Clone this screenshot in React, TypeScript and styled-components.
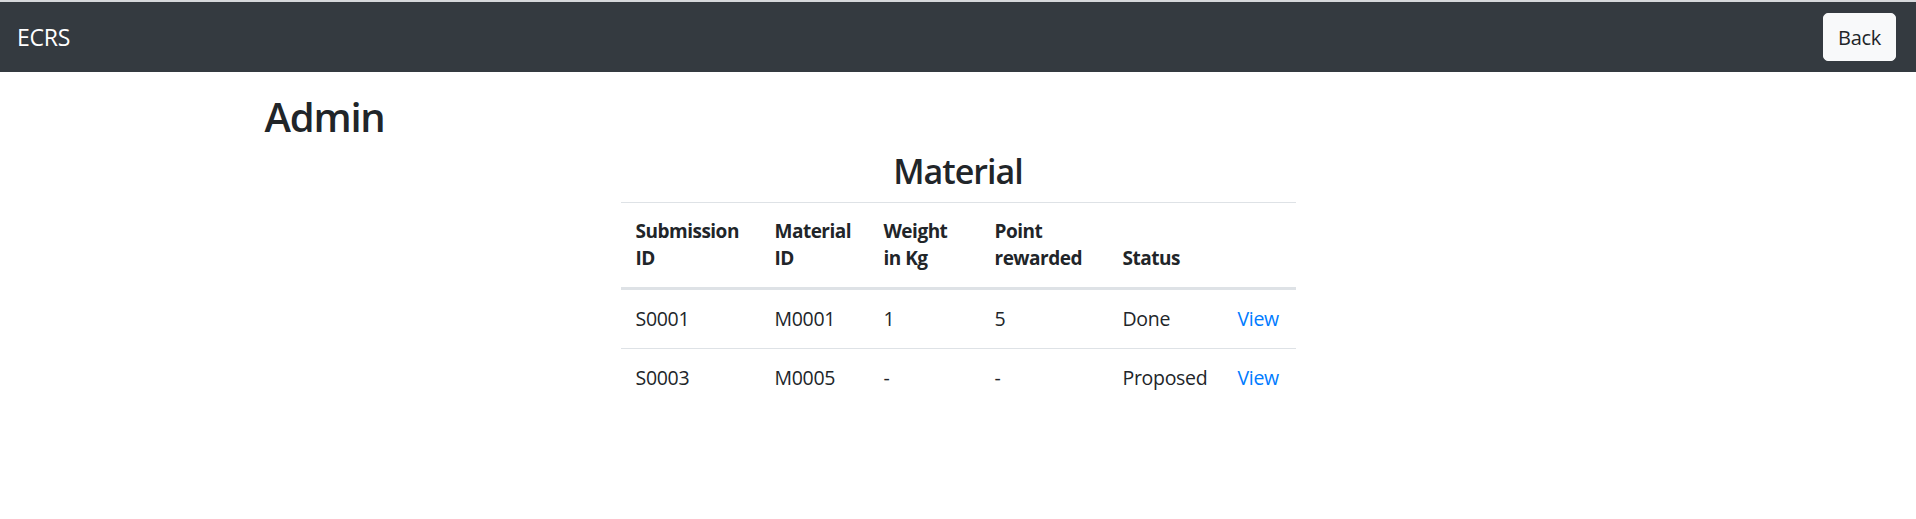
import React from "react";
import styled, { createGlobalStyle } from "styled-components";

const GlobalStyle = createGlobalStyle`
  html, body {
    margin: 0;
    padding: 0;
    background: #ffffff;
  }
  body {
    font-family: "Open Sans", "Noto Sans", "Liberation Sans", sans-serif;
    font-size: 20px;
    color: #212529;
    -webkit-font-smoothing: antialiased;
  }
  * { box-sizing: border-box; }
`;

const Page = styled.div`
  border-top: 2px solid #d6d8db;
`;

const NavBar = styled.nav`
  height: 70px;
  background: #343a40;
  display: flex;
  align-items: center;
  justify-content: space-between;
  padding: 0 20px 0 17px;
`;

const Brand = styled.a`
  font-size: 23px;
  color: #ffffff;
  text-decoration: none;
  letter-spacing: -0.2px;
`;

const BackButton = styled.button`
  height: 48px;
  width: 73px;
  padding: 0;
  font-family: inherit;
  font-size: 20px;
  color: #212529;
  background: #f8f9fa;
  border: 1px solid #f8f9fa;
  border-radius: 5px;
  cursor: pointer;
  letter-spacing: -0.3px;
`;

const Container = styled.main`
  max-width: 1425px;
  margin: 0 auto;
  padding: 20px 19px 0;
`;

const PageTitle = styled.h1`
  margin: 0 0 10px;
  font-size: 40px;
  font-weight: 600;
  line-height: 49px;
  letter-spacing: -1.2px;
`;

const Section = styled.section`
  width: 675px;
  margin: 0 auto;
`;

const SectionTitle = styled.h3`
  margin: 0 0 10px;
  font-size: 34px;
  font-weight: 600;
  line-height: 41px;
  text-align: center;
  letter-spacing: -1px;
`;

const Table = styled.table`
  width: 100%;
  border-collapse: collapse;
  table-layout: fixed;
`;

const HeadCell = styled.th<{ $w: number }>`
  width: ${(p) => p.$w}px;
  text-align: left;
  vertical-align: bottom;
  padding: 15px;
  font-size: 19px;
  font-weight: 700;
  line-height: 27px;
  letter-spacing: -0.5px;
  border-top: 1px solid #dee2e6;
  border-bottom: 3px solid #dee2e6;
`;

const Cell = styled.td`
  padding: 15px;
  font-size: 19.5px;
  line-height: 27.5px;
  letter-spacing: -0.3px;
  vertical-align: top;
  border-top: 1px solid #dee2e6;
  white-space: nowrap;
`;

const ViewLink = styled.a`
  color: #007bff;
  text-decoration: none;
`;

const columns = [
  { label: "Submission ID", w: 139 },
  { label: "Material ID", w: 109 },
  { label: "Weight in Kg", w: 111 },
  { label: "Point rewarded", w: 128 },
  { label: "Status", w: 115 },
  { label: "", w: 73 },
];

const rows = [
  { sid: "S0001", mid: "M0001", weight: "1", points: "5", status: "Done" },
  { sid: "S0003", mid: "M0005", weight: "-", points: "-", status: "Proposed" },
];

export default function App() {
  return (
    <Page>
      <GlobalStyle />
      <NavBar>
        <Brand href="#">ECRS</Brand>
        <BackButton>Back</BackButton>
      </NavBar>
      <Container>
        <PageTitle>Admin</PageTitle>
        <Section>
          <SectionTitle>Material</SectionTitle>
          <Table>
            <thead>
              <tr>
                {columns.map((c, i) => (
                  <HeadCell key={i} $w={c.w}>
                    {c.label}
                  </HeadCell>
                ))}
              </tr>
            </thead>
            <tbody>
              {rows.map((r) => (
                <tr key={r.sid}>
                  <Cell>{r.sid}</Cell>
                  <Cell>{r.mid}</Cell>
                  <Cell>{r.weight}</Cell>
                  <Cell>{r.points}</Cell>
                  <Cell>{r.status}</Cell>
                  <Cell>
                    <ViewLink href="#">View</ViewLink>
                  </Cell>
                </tr>
              ))}
            </tbody>
          </Table>
        </Section>
      </Container>
    </Page>
  );
}
